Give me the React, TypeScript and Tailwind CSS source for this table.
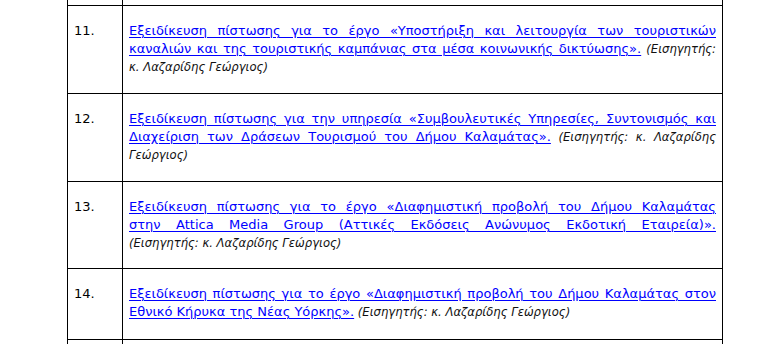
import React from "react";

type Line = { parts: { t: string; link?: boolean }[]; justify: boolean };
type Row = { n: string; lines: Line[]; h: string };

const L = (t: string) => ({ t, link: true });
const I = (t: string) => ({ t });

const rows: Row[] = [
  {
    n: "11.",
    h: "h-[88px]",
    lines: [
      { justify: true, parts: [L("Εξειδίκευση πίστωσης για το έργο «Υποστήριξη και λειτουργία των τουριστικών")] },
      { justify: true, parts: [L("καναλιών και της τουριστικής καμπάνιας στα μέσα κοινωνικής δικτύωσης»."), I(" (Εισηγητής:")] },
      { justify: false, parts: [I("κ. Λαζαρίδης Γεώργιος)")] },
    ],
  },
  {
    n: "12.",
    h: "h-[88px]",
    lines: [
      { justify: true, parts: [L("Εξειδίκευση πίστωσης για την υπηρεσία «Συμβουλευτικές Υπηρεσίες, Συντονισμός και")] },
      { justify: true, parts: [L("Διαχείριση των Δράσεων Τουρισμού του Δήμου Καλαμάτας»."), I(" (Εισηγητής: κ. Λαζαρίδης")] },
      { justify: false, parts: [I("Γεώργιος)")] },
    ],
  },
  {
    n: "13.",
    h: "h-[87px]",
    lines: [
      { justify: true, parts: [L("Εξειδίκευση πίστωσης για το έργο «Διαφημιστική προβολή του Δήμου Καλαμάτας")] },
      { justify: true, parts: [L("στην Attica Media Group (Αττικές Εκδόσεις Ανώνυμος Εκδοτική Εταιρεία)».")] },
      { justify: false, parts: [I("(Εισηγητής: κ. Λαζαρίδης Γεώργιος)")] },
    ],
  },
  {
    n: "14.",
    h: "h-[71px]",
    lines: [
      { justify: true, parts: [L("Εξειδίκευση πίστωσης για το έργο «Διαφημιστική προβολή του Δήμου Καλαμάτας στον")] },
      { justify: false, parts: [L("Εθνικό Κήρυκα της Νέας Υόρκης»."), I(" (Εισηγητής: κ. Λαζαρίδης Γεώργιος)")] },
    ],
  },
];

export default function App() {
  return (
    <div className="w-[784px] h-[344px] bg-white overflow-hidden font-['DejaVu_Sans',sans-serif] text-[13px] leading-[18px] text-black">
      <div className="ml-[67px] w-[656px] border-l border-r border-black">
        <div className="grid grid-cols-[55px_1fr] h-[6px] border-b border-black">
          <div className="border-r border-black" />
          <div />
        </div>
        {rows.map((r) => (
          <div key={r.n} className={`grid grid-cols-[55px_1fr] border-b border-black ${r.h}`}>
            <div className="border-r border-black pl-[6px] pt-4">{r.n}</div>
            <div className="pl-[6px] pr-[6px] pt-4">
              {r.lines.map((ln, i) => (
                <div
                  key={i}
                  className={ln.justify ? "text-justify [text-align-last:justify] whitespace-nowrap" : "text-left whitespace-nowrap"}
                >
                  {ln.parts.map((p, j) =>
                    p.link ? (
                      <span key={j} className="text-[#0000ff] underline decoration-1 underline-offset-2">
                        {p.t}
                      </span>
                    ) : (
                      <span key={j} className="italic text-[#111] text-[11.6px]">
                        {p.t}
                      </span>
                    )
                  )}
                </div>
              ))}
            </div>
          </div>
        ))}
        <div className="grid grid-cols-[55px_1fr] h-[20px]">
          <div className="border-r border-black" />
          <div />
        </div>
      </div>
    </div>
  );
}
